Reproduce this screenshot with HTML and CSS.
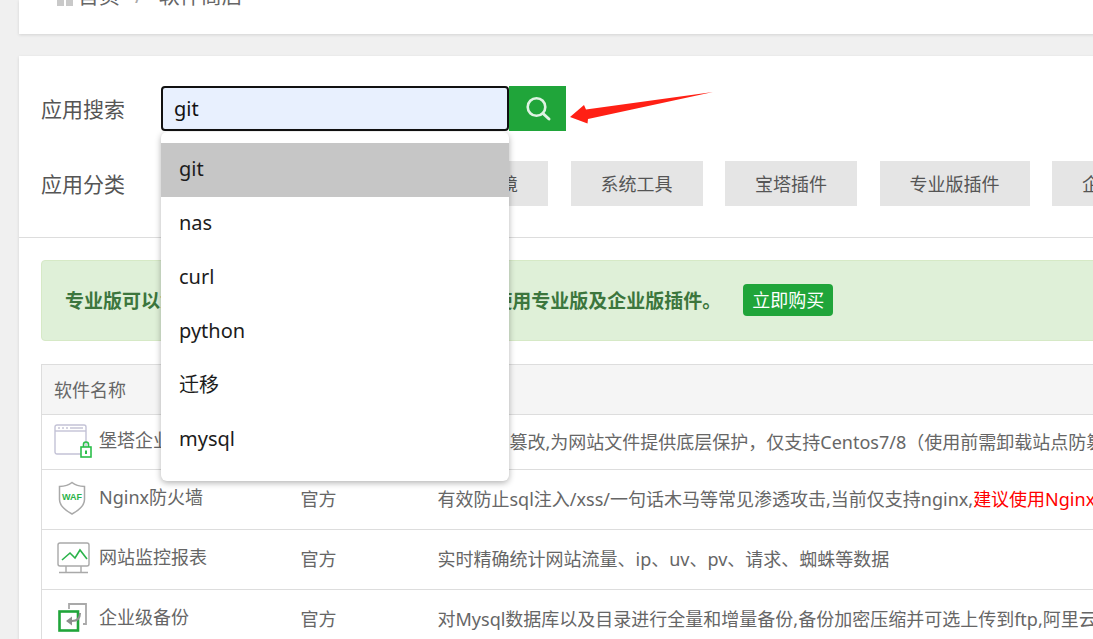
FILE: index.html
```html
<!DOCTYPE html>
<html>
    <head>
        <title>软件商店</title>
        <link rel="stylesheet" href="styles.css">
    </head>
    <body>
        <div class="panel crumbs">
            <span class="crumb-icon"><i></i><i></i></span>
            <span class="crumb-link">首页</span>
            <span class="crumb-sep">/</span>
            <span class="crumb-link">软件商店</span>
        </div>

        <div class="panel store">
            <div class="filter-row search-row">
                <span class="filter-label">应用搜索</span>
                <div class="search-input">git</div>
                <button class="search-btn">
                    <svg width="30" height="30" viewBox="0 0 30 30" fill="none" stroke="#dff3e3">
                        <circle cx="13.5" cy="13" r="8.8" stroke-width="2.6"/>
                        <path d="M20 19.5l6 5.5" stroke-width="3" stroke-linecap="round"/>
                    </svg>
                </button>
                <ul class="suggest">
                    <li class="active">git</li>
                    <li>nas</li>
                    <li>curl</li>
                    <li>python</li>
                    <li>迁移</li>
                    <li>mysql</li>
                </ul>
                <svg class="arrow" width="150" height="40" viewBox="0 0 150 40">
                    <polygon fill="#ff2015" points="1,31 15,19 17,23.5 144,6 19,33 18.500,37.500"/>
                </svg>
            </div>

            <div class="filter-row tabs-row">
                <span class="filter-label">应用分类</span>
                <div class="tabs">
                    <span class="tab">全部</span>
                    <span class="tab">已安装</span>
                    <span class="tab">运行环境</span>
                    <span class="tab">系统工具</span>
                    <span class="tab">宝塔插件</span>
                    <span class="tab">专业版插件</span>
                    <span class="tab">企业版插件</span>
                </div>
            </div>

            <div class="store-body">
                <div class="notice">
                    <span>专业版可以免费使用所有专业插件, 企业版可以免费使用专业版及企业版插件。</span>
                    <span class="buy-btn">立即购买</span>
                </div>

                <table class="soft-table">
                    <colgroup>
                        <col class="col-name">
                        <col class="col-type">
                        <col>
                    </colgroup>
                    <tr>
                        <th>软件名称</th>
                        <th>开发商</th>
                        <th>说明</th>
                    </tr>
                    <tr class="row-first">
                        <td>
                            <div class="soft-name">
                                <svg class="soft-icon" width="38" height="34" viewBox="0 0 38 34" fill="none">
                                    <rect x="1" y="1" width="31" height="29" rx="2" stroke="#c3c2d6" stroke-width="1.4"/>
                                    <path d="M1 7h31" stroke="#c3c2d6" stroke-width="1.4"/>
                                    <path d="M4 4h2M8 4h2M12 4h2M16 4h13" stroke="#d4d3e0" stroke-width="2"/>
                                    <rect x="27" y="23" width="10" height="10" fill="#fff" stroke="#2bbf4a" stroke-width="1.6"/>
                                    <path d="M29.5 23v-2.500a2.500 2.500 0 0 1 5 0V23" stroke="#2bbf4a" stroke-width="1.6"/>
                                    <rect x="31" y="26.500" width="2" height="3.500" fill="#2bbf4a"/>
                                </svg>
                                <span>堡塔企业级防篡改</span>
                            </div>
                        </td>
                        <td>官方</td>
                        <td>防止内容篡改,为网站文件提供底层保护，仅支持Centos7/8（使用前需卸载站点防篡改）</td>
                    </tr>
                    <tr>
                        <td>
                            <div class="soft-name">
                                <svg class="soft-icon" width="38" height="34" viewBox="0 0 38 34" fill="none">
                                    <path d="M18 1.500c3 2.500 7 3.800 12.500 4v13c0 6-5 10.500-12.500 14.500C10.500 29 5.500 24.500 5.500 18.500v-13c5.500-.2 9.500-1.500 12.500-4z" stroke="#a9a9a9" stroke-width="1.5"/>
                                    <text x="18" y="19" text-anchor="middle" class="waf-text">WAF</text>
                                </svg>
                                <span>Nginx防火墙</span>
                            </div>
                        </td>
                        <td>官方</td>
                        <td>有效防止sql注入/xss/一句话木马等常见渗透攻击,当前仅支持nginx,<span class="warn">建议使用Nginx防火墙专业版</span></td>
                    </tr>
                    <tr>
                        <td>
                            <div class="soft-name">
                                <svg class="soft-icon" width="38" height="34" viewBox="0 0 38 34" fill="none">
                                    <rect x="4" y="2" width="31" height="23" rx="2" stroke="#a9a9a9" stroke-width="1.4"/>
                                    <path d="M12 25v6M27 25v6M5 31.500h29" stroke="#a9a9a9" stroke-width="1.4"/>
                                    <path d="M8 19l8-7 5 5 5-8 7 9" stroke="#2bb34a" stroke-width="1.6"/>
                                </svg>
                                <span>网站监控报表</span>
                            </div>
                        </td>
                        <td>官方</td>
                        <td>实时精确统计网站流量、ip、uv、pv、请求、蜘蛛等数据</td>
                    </tr>
                    <tr>
                        <td>
                            <div class="soft-name">
                                <svg class="soft-icon" width="38" height="34" viewBox="0 0 38 34" fill="none">
                                    <path d="M15 8V3h17v20h-3" stroke="#a9a9a9" stroke-width="1.8"/>
                                    <rect x="5.500" y="10.500" width="18.500" height="19" fill="#fff" stroke="#20a53a" stroke-width="2.600"/>
                                    <path d="M26 12c0 5-3 8-8 8h-5" stroke="#8f8f8f" stroke-width="2"/>
                                    <path d="M18 15.500l-6 4.500 6 4.500z" fill="#8f8f8f"/>
                                </svg>
                                <span>企业级备份</span>
                            </div>
                        </td>
                        <td>官方</td>
                        <td>对Mysql数据库以及目录进行全量和增量备份,备份加密压缩并可选上传到ftp,阿里云OSS,腾讯云COS</td>
                    </tr>
                </table>
            </div>
        </div>
    </body>
</html>
```

FILE: styles.css
```css
html, body {
    height: 100%;
}
body {
    font-family: "Noto Sans", "Noto Sans CJK SC", sans-serif;
    background: #f0f0f0;
    color: #666;
    margin: 0;
    padding-left: 19px;
    overflow: hidden;
    box-sizing: border-box;
}
.panel {
    width: 1200px;
    background: #fff;
    box-shadow: 0 1px 3px rgba(0, 0, 0, 0.12);
}

/* breadcrumb, scrolled mostly out of view */
.crumbs {
    height: 34px;
    padding: 0 0 25px 38px;
    box-sizing: border-box;
    display: flex;
    align-items: flex-end;
    font-size: 21px;
    line-height: 28px;
    overflow: hidden;
}
.crumb-icon {
    display: flex;
    gap: 2px;
    margin-right: 5px;
    margin-bottom: 3px;
}
.crumb-icon i {
    display: block;
    width: 7px;
    height: 12px;
    background: #c9c9c9;
}
.crumb-sep {
    margin: 0 16px 0 15px;
    color: #aaa;
}

.store {
    margin-top: 22px;
    height: 700px;
    padding-top: 30px;
}
.filter-row {
    display: flex;
    padding-left: 22px;
}
.filter-label {
    width: 120px;
    font-size: 21px;
    line-height: 47px;
    color: #555;
}
.search-row {
    position: relative;
    height: 45px;
}
.search-input {
    width: 348px;
    height: 45px;
    box-sizing: border-box;
    border: 2px solid #111;
    border-radius: 4px;
    background: #e8f0fe;
    color: #111;
    font-size: 20px;
    line-height: 41px;
    padding-left: 11px;
}
.search-btn {
    width: 57px;
    height: 45px;
    padding: 0;
    border: 0;
    background: #20a53a;
    display: flex;
    align-items: center;
    justify-content: center;
}
.suggest {
    position: absolute;
    left: 142px;
    top: 46px;
    z-index: 5;
    width: 348px;
    margin: 0;
    padding: 11px 0 14px;
    list-style: none;
    background: #fff;
    border-radius: 6px;
    box-shadow: 0 2px 6px rgba(0, 0, 0, 0.3);
}
.suggest li {
    height: 54px;
    line-height: 52px;
    padding-left: 18px;
    font-size: 20px;
    color: #1c1c1c;
}
.suggest li.active {
    background: #c6c6c6;
}
.arrow {
    position: absolute;
    left: 550px;
    top: 0;
}

.tabs-row {
    margin-top: 30px;
    padding-bottom: 29px;
    border-bottom: 1px solid #ddd;
}
.tabs {
    display: flex;
    gap: 22.5px;
    height: 45px;
    white-space: nowrap;
}
.tab {
    height: 45px;
    line-height: 46px;
    padding: 0 30px;
    background: #e5e5e5;
    font-size: 18px;
    color: #555;
}

.store-body {
    padding: 22px 0 0 22px;
}
.notice {
    display: flex;
    align-items: center;
    height: 81px;
    box-sizing: border-box;
    padding: 0 0 2px 23px;
    background: #dff0d8;
    border: 1px solid #d6e9c6;
    border-radius: 4px;
    color: #3c763d;
    font-size: 19px;
    font-weight: bold;
    white-space: nowrap;
}
.buy-btn {
    margin-left: 22px;
    padding: 0 9px;
    height: 32px;
    line-height: 32px;
    background: #20a53a;
    border-radius: 4px;
    color: #fff;
    font-size: 18px;
    font-weight: normal;
}
.soft-table {
    margin-top: 23px;
    width: 1160px;
    table-layout: fixed;
    border-collapse: collapse;
    border: 1px solid #ddd;
    font-size: 18px;
}
.col-name {
    width: 247px;
}
.col-type {
    width: 137px;
}
.soft-table th, .soft-table td {
    padding: 0 12px 4px;
    border-top: 1px solid #ddd;
    border-bottom: 1px solid #ddd;
    text-align: left;
    white-space: nowrap;
    overflow: hidden;
    height: 55px;
    font-weight: normal;
}
.soft-table th {
    padding-bottom: 2px;
    height: 47px;
    background: #f5f5f5;
}
.soft-table .row-first td {
    padding-bottom: 2px;
    height: 52px;
}
.soft-name {
    display: flex;
    align-items: center;
    gap: 7px;
    margin-top: -4px;
    font-size: 18px;
}
.soft-icon {
    flex: none;
    margin-top: 4px;
}
.waf-text {
    font-family: "Liberation Sans", sans-serif;
    font-size: 9px;
    font-weight: bold;
    fill: #2bb34a;
}
.warn {
    color: #f00;
}
```
